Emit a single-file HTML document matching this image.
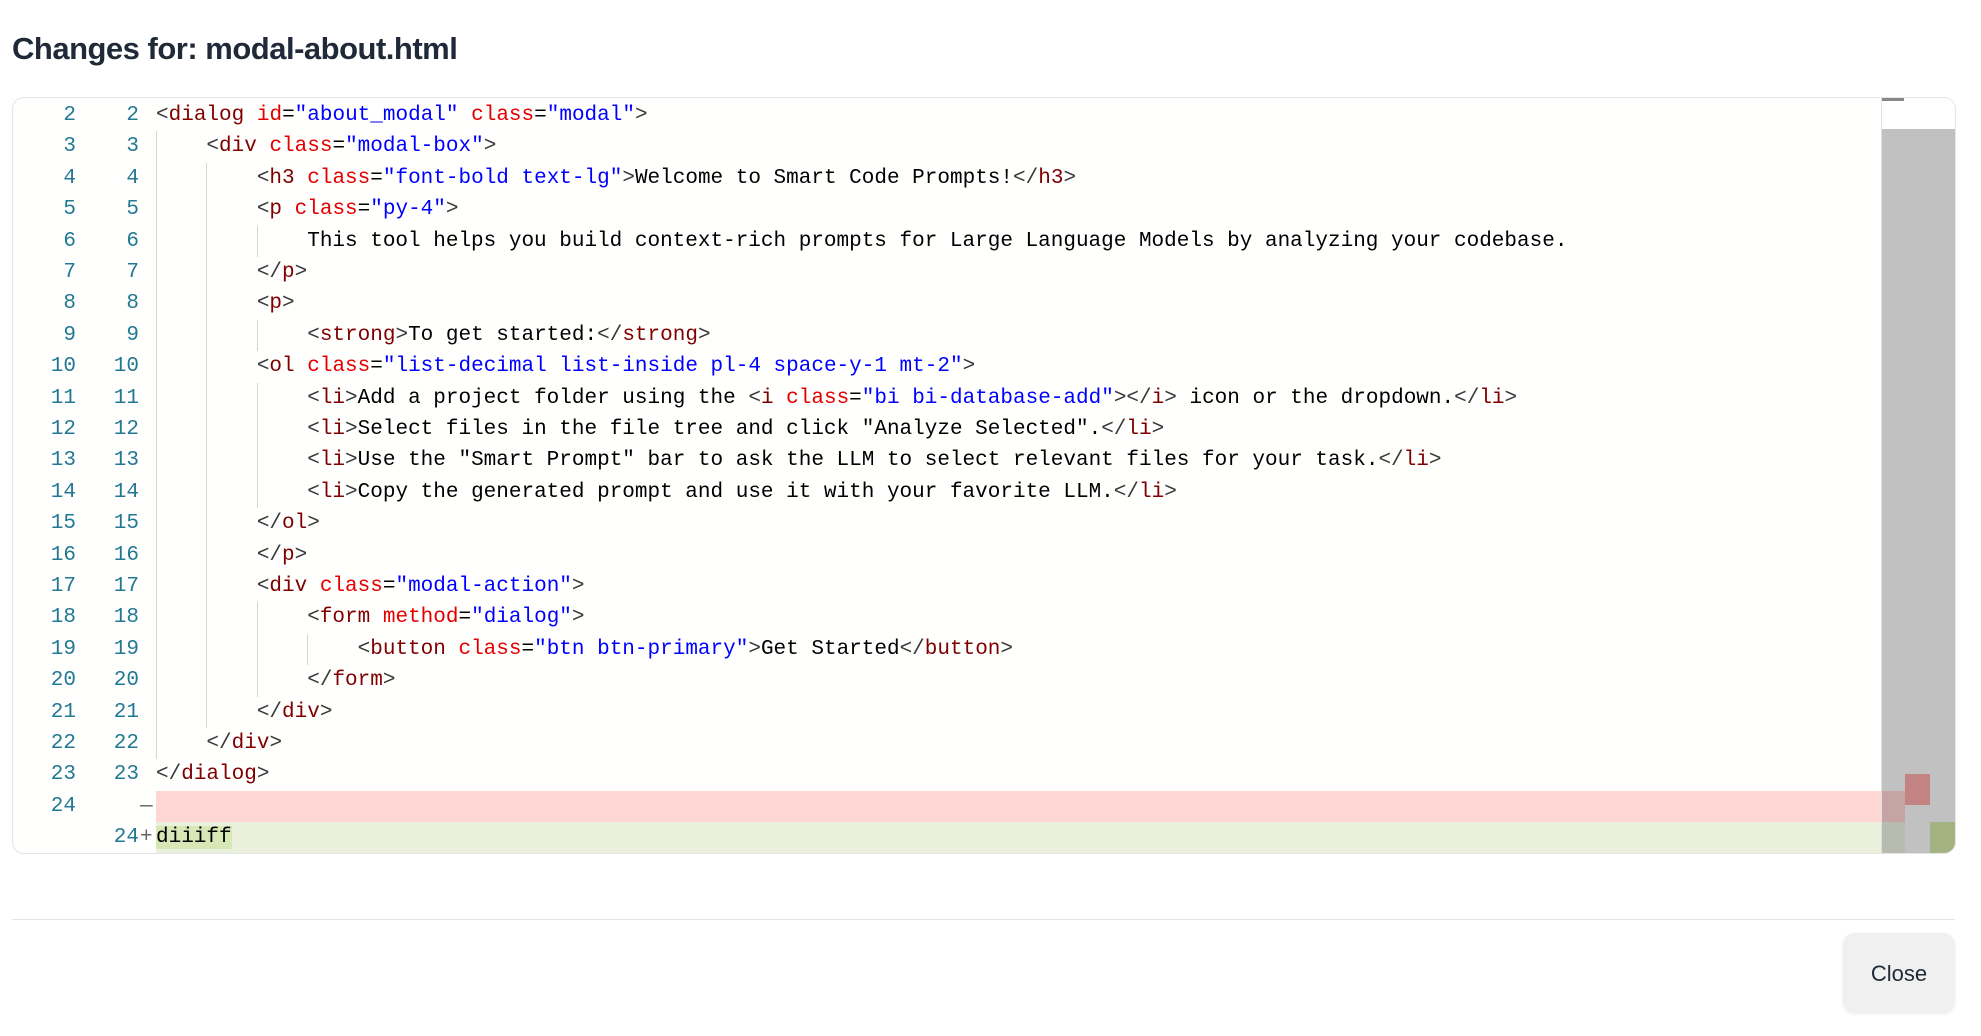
<!DOCTYPE html>
<html><head><meta charset="utf-8"><style>
html,body{margin:0;padding:0;background:#fff;width:1981px;height:1036px;overflow:hidden}
h1{position:absolute;left:12px;top:31px;margin:0;font:bold 31px "Liberation Sans",sans-serif;color:#1f2937;letter-spacing:-0.5px}
.ed{position:absolute;left:12px;top:97px;width:1942px;height:755px;border:1px solid #e5e5e5;border-radius:12px;overflow:hidden;background:#fffffe}
.row{position:absolute;left:0;height:31.4px;width:1869px;font:21px/31.4px "Liberation Mono",monospace;white-space:pre;color:#000}
.n1,.n2{position:absolute;top:0;width:40px;text-align:right;color:#237893}
.n1{left:23px}.n2{left:86px}
.mk{position:absolute;left:127px;color:#666}
.code{position:absolute;left:143px;top:0;height:31.4px}
.g{display:inline-block;width:4ch;height:31.4px;vertical-align:top;box-shadow:inset 1px 0 0 #d4d4d4}
.t{color:#800000}.a{color:#e50000}.v{color:#0000ff}.b{color:#383838}
.del{background:#ffd7d5}.add{background:#eaf0dc}
.mini{position:absolute;left:1868px;top:0;width:74px;height:755px;background:#fff;border-left:1px solid #e0e0e0}
</style></head><body>
<h1>Changes for: modal-about.html</h1>
<div class="ed">
<div class="row" style="top:2px"><span class="n1">2</span><span class="n2">2</span><span class="code"><span class="b">&lt;</span><span class="t">dialog</span> <span class="a">id</span>=<span class="v">"about_modal"</span> <span class="a">class</span>=<span class="v">"modal"</span><span class="b">&gt;</span></span></div>
<div class="row" style="top:33.4px"><span class="n1">3</span><span class="n2">3</span><span class="code"><span class="g"></span><span class="b">&lt;</span><span class="t">div</span> <span class="a">class</span>=<span class="v">"modal-box"</span><span class="b">&gt;</span></span></div>
<div class="row" style="top:64.8px"><span class="n1">4</span><span class="n2">4</span><span class="code"><span class="g"></span><span class="g"></span><span class="b">&lt;</span><span class="t">h3</span> <span class="a">class</span>=<span class="v">"font-bold text-lg"</span><span class="b">&gt;</span>Welcome to Smart Code Prompts!<span class="b">&lt;/</span><span class="t">h3</span><span class="b">&gt;</span></span></div>
<div class="row" style="top:96.2px"><span class="n1">5</span><span class="n2">5</span><span class="code"><span class="g"></span><span class="g"></span><span class="b">&lt;</span><span class="t">p</span> <span class="a">class</span>=<span class="v">"py-4"</span><span class="b">&gt;</span></span></div>
<div class="row" style="top:127.6px"><span class="n1">6</span><span class="n2">6</span><span class="code"><span class="g"></span><span class="g"></span><span class="g"></span>This tool helps you build context-rich prompts for Large Language Models by analyzing your codebase.</span></div>
<div class="row" style="top:159px"><span class="n1">7</span><span class="n2">7</span><span class="code"><span class="g"></span><span class="g"></span><span class="b">&lt;/</span><span class="t">p</span><span class="b">&gt;</span></span></div>
<div class="row" style="top:190.4px"><span class="n1">8</span><span class="n2">8</span><span class="code"><span class="g"></span><span class="g"></span><span class="b">&lt;</span><span class="t">p</span><span class="b">&gt;</span></span></div>
<div class="row" style="top:221.8px"><span class="n1">9</span><span class="n2">9</span><span class="code"><span class="g"></span><span class="g"></span><span class="g"></span><span class="b">&lt;</span><span class="t">strong</span><span class="b">&gt;</span>To get started:<span class="b">&lt;/</span><span class="t">strong</span><span class="b">&gt;</span></span></div>
<div class="row" style="top:253.2px"><span class="n1">10</span><span class="n2">10</span><span class="code"><span class="g"></span><span class="g"></span><span class="b">&lt;</span><span class="t">ol</span> <span class="a">class</span>=<span class="v">"list-decimal list-inside pl-4 space-y-1 mt-2"</span><span class="b">&gt;</span></span></div>
<div class="row" style="top:284.6px"><span class="n1">11</span><span class="n2">11</span><span class="code"><span class="g"></span><span class="g"></span><span class="g"></span><span class="b">&lt;</span><span class="t">li</span><span class="b">&gt;</span>Add a project folder using the <span class="b">&lt;</span><span class="t">i</span> <span class="a">class</span>=<span class="v">"bi bi-database-add"</span><span class="b">&gt;&lt;/</span><span class="t">i</span><span class="b">&gt;</span> icon or the dropdown.<span class="b">&lt;/</span><span class="t">li</span><span class="b">&gt;</span></span></div>
<div class="row" style="top:316px"><span class="n1">12</span><span class="n2">12</span><span class="code"><span class="g"></span><span class="g"></span><span class="g"></span><span class="b">&lt;</span><span class="t">li</span><span class="b">&gt;</span>Select files in the file tree and click "Analyze Selected".<span class="b">&lt;/</span><span class="t">li</span><span class="b">&gt;</span></span></div>
<div class="row" style="top:347.4px"><span class="n1">13</span><span class="n2">13</span><span class="code"><span class="g"></span><span class="g"></span><span class="g"></span><span class="b">&lt;</span><span class="t">li</span><span class="b">&gt;</span>Use the "Smart Prompt" bar to ask the LLM to select relevant files for your task.<span class="b">&lt;/</span><span class="t">li</span><span class="b">&gt;</span></span></div>
<div class="row" style="top:378.8px"><span class="n1">14</span><span class="n2">14</span><span class="code"><span class="g"></span><span class="g"></span><span class="g"></span><span class="b">&lt;</span><span class="t">li</span><span class="b">&gt;</span>Copy the generated prompt and use it with your favorite LLM.<span class="b">&lt;/</span><span class="t">li</span><span class="b">&gt;</span></span></div>
<div class="row" style="top:410.2px"><span class="n1">15</span><span class="n2">15</span><span class="code"><span class="g"></span><span class="g"></span><span class="b">&lt;/</span><span class="t">ol</span><span class="b">&gt;</span></span></div>
<div class="row" style="top:441.6px"><span class="n1">16</span><span class="n2">16</span><span class="code"><span class="g"></span><span class="g"></span><span class="b">&lt;/</span><span class="t">p</span><span class="b">&gt;</span></span></div>
<div class="row" style="top:473px"><span class="n1">17</span><span class="n2">17</span><span class="code"><span class="g"></span><span class="g"></span><span class="b">&lt;</span><span class="t">div</span> <span class="a">class</span>=<span class="v">"modal-action"</span><span class="b">&gt;</span></span></div>
<div class="row" style="top:504.4px"><span class="n1">18</span><span class="n2">18</span><span class="code"><span class="g"></span><span class="g"></span><span class="g"></span><span class="b">&lt;</span><span class="t">form</span> <span class="a">method</span>=<span class="v">"dialog"</span><span class="b">&gt;</span></span></div>
<div class="row" style="top:535.8px"><span class="n1">19</span><span class="n2">19</span><span class="code"><span class="g"></span><span class="g"></span><span class="g"></span><span class="g"></span><span class="b">&lt;</span><span class="t">button</span> <span class="a">class</span>=<span class="v">"btn btn-primary"</span><span class="b">&gt;</span>Get Started<span class="b">&lt;/</span><span class="t">button</span><span class="b">&gt;</span></span></div>
<div class="row" style="top:567.2px"><span class="n1">20</span><span class="n2">20</span><span class="code"><span class="g"></span><span class="g"></span><span class="g"></span><span class="b">&lt;/</span><span class="t">form</span><span class="b">&gt;</span></span></div>
<div class="row" style="top:598.6px"><span class="n1">21</span><span class="n2">21</span><span class="code"><span class="g"></span><span class="g"></span><span class="b">&lt;/</span><span class="t">div</span><span class="b">&gt;</span></span></div>
<div class="row" style="top:630px"><span class="n1">22</span><span class="n2">22</span><span class="code"><span class="g"></span><span class="b">&lt;/</span><span class="t">div</span><span class="b">&gt;</span></span></div>
<div class="row" style="top:661.4px"><span class="n1">23</span><span class="n2">23</span><span class="code"><span class="b">&lt;/</span><span class="t">dialog</span><span class="b">&gt;</span></span></div>
<div class="row" style="top:692.8px"><span class="n1">24</span><span class="mk">—</span><span class="code del" style="width:1726px"></span></div>
<div class="row" style="top:724.2px"><span class="n2">24</span><span class="mk">+</span><span class="code add" style="width:1726px"><span style="background:#d7e8b6">diiiff</span></span></div>
<div class="mini">
<div style="position:absolute;left:0;top:0;width:22px;height:3px;background:#888"></div>
<div style="position:absolute;left:0;top:31px;width:74px;height:724px;background:#c1c1c1"></div>
<div style="position:absolute;left:0;top:693px;width:23px;height:31px;background:#c6a4a4"></div>
<div style="position:absolute;left:23px;top:676px;width:25px;height:31px;background:#c38383"></div>
<div style="position:absolute;left:0;top:724px;width:23px;height:31px;background:#b8bcb0"></div>
<div style="position:absolute;left:48px;top:724px;width:26px;height:31px;background:#a3b382"></div>
</div>
</div>
<div style="position:absolute;left:12px;top:919px;width:1943px;height:1px;background:#e5e5e5"></div>
<div style="position:absolute;left:1843px;top:933px;width:112px;height:80px;background:#f0f0f0;border-radius:12px;box-shadow:0 1px 3px rgba(0,0,0,0.08);font:22px/82px 'Liberation Sans',sans-serif;color:#1f2937;text-align:center">Close</div>
</body></html>
